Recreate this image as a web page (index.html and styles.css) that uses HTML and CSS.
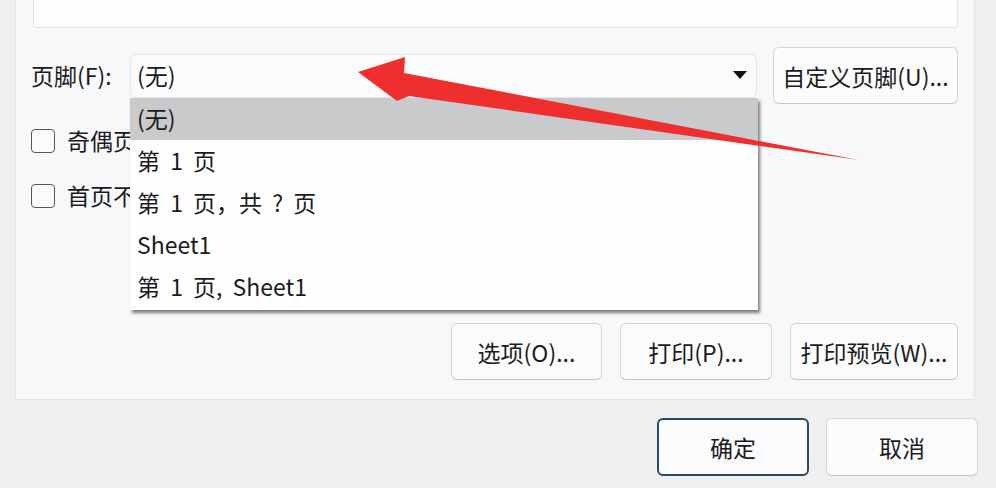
FILE: index.html
```html
<!DOCTYPE html>
<html lang="zh-CN">
<head>
<meta charset="utf-8">
<title>页脚</title>
<link rel="stylesheet" href="styles.css">
</head>
<body>
<div class="panel">
  <div class="preview"></div>
  <div class="footer-row">
    <span class="label">页脚(F):</span>
    <div class="select-wrap">
      <div class="select">
        <span>(无)</span>
        <span class="caret"></span>
      </div>
      <ul class="dropdown">
        <li class="item selected">(无)</li>
        <li class="item">第 1 页</li>
        <li class="item">第 1 页，共 ? 页</li>
        <li class="item">Sheet1</li>
        <li class="item">第 1 页, Sheet1</li>
      </ul>
    </div>
    <button class="btn btn-custom">自定义页脚(U)...</button>
  </div>
  <div class="check-row first">
    <span class="checkbox"></span>
    <span class="check-label">奇偶页不同(D)</span>
  </div>
  <div class="check-row second">
    <span class="checkbox"></span>
    <span class="check-label">首页不同(I)</span>
  </div>
  <div class="button-row">
    <button class="btn btn-options">选项(O)...</button>
    <button class="btn btn-print">打印(P)...</button>
    <button class="btn btn-preview">打印预览(W)...</button>
  </div>
</div>
<div class="dialog-row">
  <button class="btn btn-ok">确定</button>
  <button class="btn btn-cancel">取消</button>
</div>
<svg class="arrow" width="996" height="488" viewBox="0 0 996 488" aria-hidden="true">
  <defs>
    <filter id="soft" x="-10%" y="-10%" width="120%" height="120%">
      <feGaussianBlur stdDeviation="0.7"/>
    </filter>
  </defs>
  <polygon filter="url(#soft)" fill="#ef2f2d" points="358,72 405,57 404,73 859,160 409,96 397,101"/>
</svg>
</body>
</html>
```

FILE: styles.css
```css
html, body {
  margin: 0;
  padding: 0;
}

body {
  width: 996px;
  height: 488px;
  overflow: hidden;
  position: relative;
  background: #eeeff1;
  font-family: "Noto Sans CJK SC", "Open Sans", sans-serif;
  font-size: 23px;
  line-height: 1.2;
  color: #1b1b1d;
}

.panel {
  margin-left: 15px;
  width: 960px;
  height: 400px;
  box-sizing: border-box;
  background: #f7f8fa;
  border: 1px solid #e3e4e7;
  border-top: none;
  padding: 0 16px 0 15px;
  display: flex;
  flex-direction: column;
}

.preview {
  height: 28px;
  box-sizing: border-box;
  margin-left: 2px;
  background: #fdfdfe;
  border: 1px solid #e2e3e6;
  border-top: none;
  border-radius: 0 0 4px 4px;
}

.footer-row {
  display: flex;
  align-items: center;
  margin-top: 19px;
  height: 57px;
}

.label {
  width: 99px;
  flex: none;
}

.select-wrap {
  position: relative;
  width: 627px;
  height: 44px;
  flex: none;
}

.select {
  height: 44px;
  box-sizing: border-box;
  border: 1px solid #e4e5e8;
  border-radius: 6px;
  background: #fafbfc;
  padding: 0 9px 0 6px;
  display: flex;
  align-items: center;
  justify-content: space-between;
}

.caret {
  width: 0;
  height: 0;
  border-left: 7px solid transparent;
  border-right: 7px solid transparent;
  border-top: 8px solid #111;
  margin-top: -2px;
}

.dropdown {
  position: absolute;
  top: 44px;
  left: 0;
  width: 628px;
  margin: 0;
  padding: 0 0 2px;
  list-style: none;
  background: #fefefe;
  box-shadow: 2px 3px 3px rgba(0, 0, 0, 0.5);
  z-index: 2;
}

.item {
  height: 42px;
  display: flex;
  align-items: center;
  padding-left: 7px;
  word-spacing: 5px;
}

.item.selected {
  background: #c9cacc;
}

.check-row {
  display: flex;
  align-items: center;
  gap: 12px;
  height: 24px;
}

.check-row.first {
  margin-top: 25px;
}

.check-row.second {
  margin-top: 31px;
}

.check-label {
  width: 63px;
  overflow: hidden;
  white-space: nowrap;
}

.checkbox {
  width: 24px;
  height: 24px;
  box-sizing: border-box;
  border: 1.5px solid #56575a;
  border-radius: 4px;
  background: #fbfbfc;
  flex: none;
}

.button-row {
  display: flex;
  justify-content: flex-end;
  gap: 18px;
  margin-top: 115px;
}

.btn {
  box-sizing: border-box;
  height: 57px;
  margin: 0;
  padding: 0;
  border: 1px solid #d3d4d7;
  border-bottom-color: #c4c5c8;
  border-radius: 6px;
  background: #fbfbfc;
  font-family: inherit;
  font-size: 23px;
  color: #1b1b1d;
  display: flex;
  align-items: center;
  justify-content: center;
  flex: none;
}

.btn-custom {
  margin-left: 16px;
  width: 185px;
}

.btn-options {
  width: 151px;
}

.btn-print {
  width: 152px;
}

.btn-preview {
  width: 168px;
}

.dialog-row {
  display: flex;
  justify-content: flex-end;
  gap: 17px;
  margin-top: 18px;
  padding-right: 18px;
}

.dialog-row .btn {
  width: 152px;
  height: 58px;
}

.btn-ok {
  border: 2px solid #294a66;
  background: #f9fbfc;
}

.arrow {
  position: absolute;
  left: 0;
  top: 0;
  pointer-events: none;
  z-index: 5;
}
```
